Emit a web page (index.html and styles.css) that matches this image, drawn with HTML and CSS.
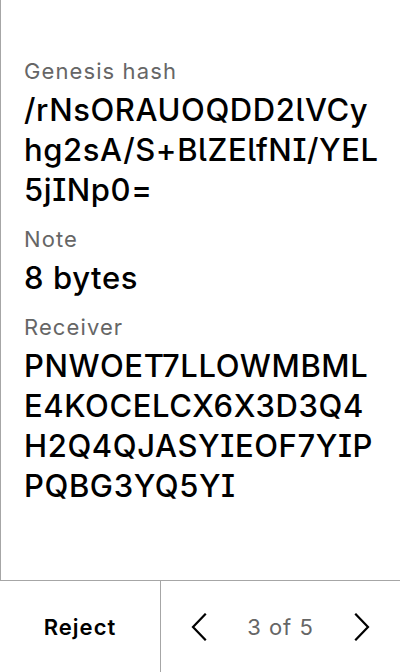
FILE: index.html
```html
<!DOCTYPE html>
<html lang="en">
<head>
<meta charset="utf-8">
<title>Transaction details</title>
<link rel="stylesheet" href="styles.css">
</head>
<body>
<div class="screen">
  <main class="content">
    <section class="field">
      <div class="label">Genesis hash</div>
      <div class="value">/rNsORAUOQDD2lVCy<br>hg2sA/S+BlZElfNI/YEL<br>5jINp0=</div>
    </section>
    <section class="field">
      <div class="label">Note</div>
      <div class="value">8 bytes</div>
    </section>
    <section class="field">
      <div class="label">Receiver</div>
      <div class="value">PNWOET7LLOWMBML<br>E4KOCELCX6X3D3Q4<br>H2Q4QJASYIEOF7YIP<br>PQBG3YQ5YI</div>
    </section>
  </main>
  <footer class="footer">
    <button class="reject">Reject</button>
    <div class="pager">
      <button class="nav" aria-label="Previous">
        <svg width="16" height="28" viewBox="0 0 16 28"><path d="M14 1.5 L2 14 L14 26.5" fill="none" stroke="#000" stroke-width="2.2" stroke-linecap="square"/></svg>
      </button>
      <span class="count">3 of 5</span>
      <button class="nav" aria-label="Next">
        <svg width="16" height="28" viewBox="0 0 16 28"><path d="M2 1.5 L14 14 L2 26.5" fill="none" stroke="#000" stroke-width="2.2" stroke-linecap="square"/></svg>
      </button>
    </div>
  </footer>
</div>
</body>
</html>
```

FILE: styles.css
```css
* { box-sizing: border-box; }
html, body { margin: 0; padding: 0; background: #fff; }
body {
  font-family: Inter, "Noto Sans", sans-serif;
  font-feature-settings: "cv05", "cv08";
  color: #000;
}
.screen {
  width: 400px;
  height: 672px;
  display: flex;
  flex-direction: column;
}
.content {
  flex: 1;
  border-left: 1px solid #a6a6a6;
  padding: 56px 16px 0 23px;
  display: flex;
  flex-direction: column;
  gap: 14px;
}
.label {
  font-size: 22px;
  line-height: 30px;
  letter-spacing: 1.1px;
  color: #666;
  margin-bottom: 4px;
}
.value {
  font-size: 31px;
  line-height: 40px;
  font-weight: 500;
  letter-spacing: 0.6px;
  color: #000;
  white-space: nowrap;
}
.footer {
  height: 92px;
  border-top: 1px solid #a6a6a6;
  display: grid;
  grid-template-columns: 161px 1fr;
}
button {
  font: inherit;
  background: none;
  border: 0;
  padding: 0;
  color: inherit;
}
.reject {
  border-right: 1px solid #a6a6a6;
  font-size: 22px;
  font-weight: 600;
  letter-spacing: 1px;
  color: #000;
}
.pager {
  display: flex;
  align-items: center;
  justify-content: space-between;
  padding: 0 16px;
}
.nav {
  width: 44px;
  height: 44px;
  display: flex;
  align-items: center;
  justify-content: center;
}
.count {
  font-size: 22px;
  letter-spacing: 1px;
  color: #666;
}
```
